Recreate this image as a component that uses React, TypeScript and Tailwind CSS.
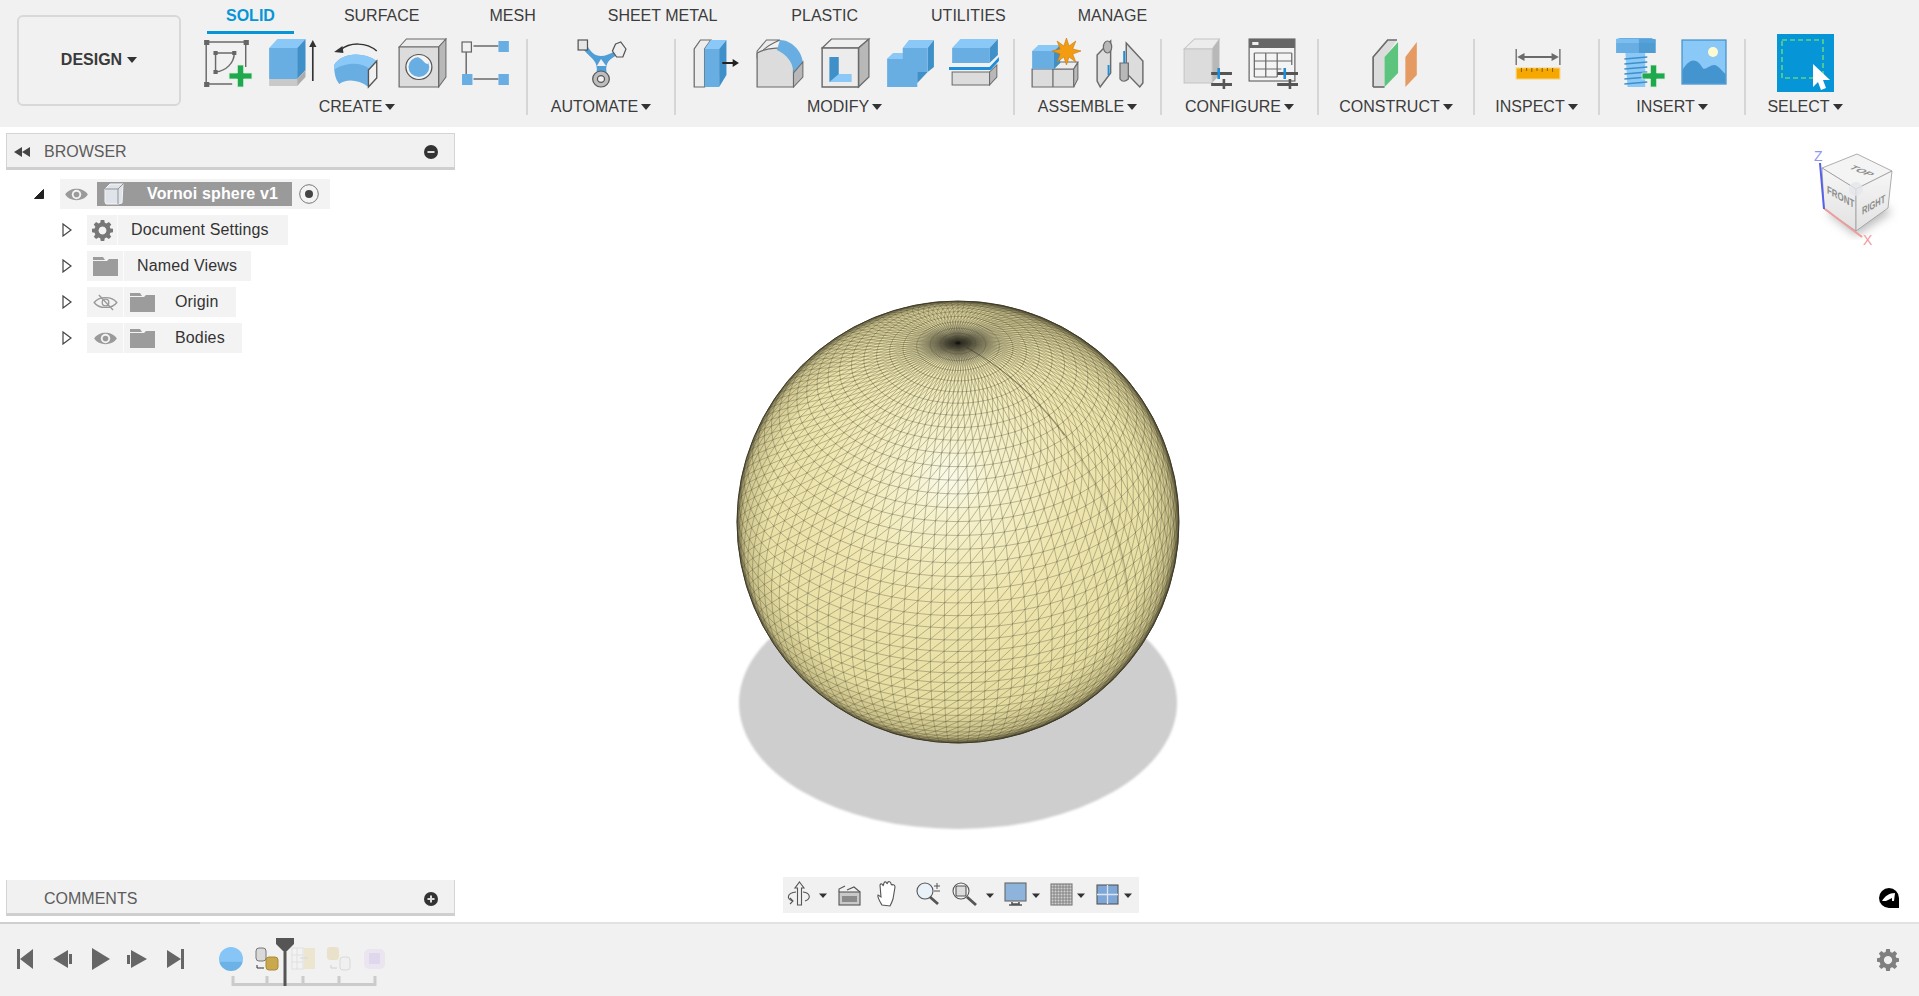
import React from "react";

const BLUE = "#68aee3";
const LIGHT = "#8ac8f8";
const DARK = "#3f90c8";
const GREY = "#dcdcdc";
const SIDE = "#b8b8b8";
const LINE = "#6a6a6a";

const TABS = [
  { label: "SURFACE", gap: "ml-[30px]" },
  { label: "MESH", gap: "ml-[30px]" },
  { label: "SHEET METAL", gap: "ml-[32px]" },
  { label: "PLASTIC", gap: "ml-[34px]" },
  { label: "UTILITIES", gap: "ml-[33px]" },
  { label: "MANAGE", gap: "ml-[32px]" },
];

function Icon({ children }: { children: React.ReactNode }) {
  return (
    <svg viewBox="0 0 50 52" preserveAspectRatio="none" className="w-[52px] h-[52px] shrink-0">
      {children}
    </svg>
  );
}

function Plus({ x, y, s = 10 }: { x: number; y: number; s?: number }) {
  return (
    <path
      d={`M${x - 3} ${y - s}h6v${s - 3}h${s - 3}v6h-${s - 3}v${s - 3}h-6v-${s - 3}h-${s - 3}v-6h${s - 3}z`}
      fill="#1fa84c"
      stroke="#d6efdc"
      strokeWidth="0.8"
    />
  );
}

function Sliders({ x, y }: { x: number; y: number }) {
  return (
    <g>
      <rect x={x} y={y} width="20" height="3" fill="#555" />
      <rect x={x} y={y + 11} width="20" height="3" fill="#555" />
      <rect x={x + 6} y={y - 4} width="2.5" height="11" fill="#1c8fdc" />
      <rect x={x + 11} y={y + 7} width="2.5" height="11" fill="#555" />
    </g>
  );
}

const SketchIcon = () => (
  <Icon>
    <path d="M5 5H43M5 5V47M5 47H30M43 5V30" stroke={LINE} strokeWidth="1.4" fill="none" />
    <path d="M3 3h5v5H3zM41 3h5v5h-5zM3 45h5v5H3z" fill="#666" />
    <path d="M14 16H32M14 16V35M32 16C32 26 24 34 14 35" stroke={LINE} strokeWidth="1.4" fill="none" />
    <path d="M12 14h4v4h-4zM30 14h4v4h-4zM12 33h4v4h-4z" fill="#666" />
    <Plus x={38} y={39} s={11} />
  </Icon>
);

const ExtrudeIcon = () => (
  <Icon>
    <path d="M3 11 11 2H38L30 11Z" fill={LIGHT} />
    <path d="M3 11H30V42H3Z" fill={BLUE} />
    <path d="M30 11 38 2V33L30 42Z" fill={DARK} />
    <path d="M3 42H30V49H3Z" fill="#c9c9c9" />
    <path d="M30 42 38 33V40L30 49Z" fill="#adadad" />
    <path d="M45 44V8" stroke="#333" strokeWidth="1.6" />
    <path d="M41.500 10 45 3 48.500 10Z" fill="#333" />
  </Icon>
);

const RevolveIcon = () => (
  <Icon>
    <path d="M3 28C10 16 30 14 44 24L36 33V50C26 42 14 42 8 47C4 42 3 35 3 28Z" fill={BLUE} />
    <path d="M3 28C10 16 30 14 44 24L37 32C28 24 12 26 3 33Z" fill={LIGHT} />
    <path d="M36 33 44 24V41L36 50Z" fill="#f1f1f1" stroke="#555" strokeWidth="1.3" />
    <path d="M9 13C18 5 34 5 44 14" stroke="#333" strokeWidth="1.5" fill="none" />
    <path d="M3 15 11 9 12 16Z" fill="#333" />
  </Icon>
);

const HoleIcon = () => (
  <Icon>
    <path d="M3 10 10 2H48L41 10Z" fill="#ececec" stroke={LINE} strokeWidth="1" />
    <path d="M41 10 48 2V40L41 50Z" fill={SIDE} stroke={LINE} strokeWidth="1" />
    <path d="M3 10H41V50H3Z" fill={GREY} stroke={LINE} strokeWidth="1.2" />
    <circle cx="22" cy="30" r="12.5" fill="#f4f4f4" stroke="#555" strokeWidth="1.2" />
    <circle cx="22" cy="30" r="10" fill={BLUE} />
    <path d="M21 20C26 22 27 27 31 27C31 22 27 19 21 20Z" fill="#f4f4f4" />
  </Icon>
);

const FormIcon = () => (
  <Icon>
    <path d="M12 9H36M5 14V37M12 42H36" stroke={LINE} strokeWidth="1.4" />
    <rect x="1" y="5" width="9" height="10" fill="#f1f1f1" stroke="#666" strokeWidth="1.2" />
    <rect x="36" y="4" width="10" height="11" fill={BLUE} />
    <rect x="1" y="37" width="10" height="11" fill={BLUE} />
    <rect x="36" y="37" width="10" height="11" fill={BLUE} />
  </Icon>
);

const AutomateIcon = () => (
  <Icon>
    <path d="M8 12C13 20 21 22 21 32L20 42H31L30 32C30 23 37 20 43 17L40 13C34 17 29 19 25 19C19 19 15 15 12 9Z" fill="#4f9fd6" />
    <path d="M25 22 30 29H21Z" fill="#f1f1f1" />
    <circle cx="25" cy="42" r="8" fill="#bdbdbd" stroke="#555" strokeWidth="1.2" />
    <circle cx="25" cy="42" r="3.4" fill="#f1f1f1" stroke="#555" strokeWidth="1.2" />
    <rect x="3" y="3" width="9" height="10" fill="#e6e6e6" stroke="#555" strokeWidth="1.2" />
    <path d="M39 7 44 5 49 12 46 20H40L36 14Z" fill="#efefef" stroke="#555" strokeWidth="1.2" />
  </Icon>
);

const PressPullIcon = () => (
  <Icon>
    <g transform="translate(2 0)">
      <path d="M3 50V12L9 3H19L13 12V50Z" fill="#ededed" stroke={LINE} strokeWidth="1.2" />
      <path d="M13 12 19 3H34L27 12Z" fill={LIGHT} />
      <path d="M13 12H27V50H13Z" fill={BLUE} />
      <path d="M27 12 34 3V38L27 50Z" fill={DARK} />
      <path d="M30 26H42" stroke="#222" strokeWidth="2" />
      <path d="M40 22 46 26 40 30Z" fill="#222" />
    </g>
  </Icon>
);

const FilletIcon = () => (
  <Icon>
    <path d="M3 14 12 3H25C18 6 8 12 3 20Z" fill="#ececec" stroke={LINE} strokeWidth="1" />
    <path d="M3 16V50H38V30C38 24 34 17 30 12C20 10 10 12 3 16Z" fill={GREY} stroke={LINE} strokeWidth="1.2" />
    <path d="M25 3C36 3 46 14 47 25L38 36C38 26 32 18 22 13Z" fill={BLUE} />
    <path d="M38 50V36L47 25V40Z" fill={SIDE} stroke={LINE} strokeWidth="1" />
  </Icon>
);

const ShellIcon = () => (
  <Icon>
    <path d="M3 11 12 2H48L38 11Z" fill="#efefef" stroke={LINE} strokeWidth="1.2" />
    <path d="M38 11 48 2V40L38 50Z" fill={SIDE} stroke={LINE} strokeWidth="1.2" />
    <path d="M3 11H38V50H3Z" fill="#ececec" stroke={LINE} strokeWidth="1.4" />
    <path d="M10 20H19V37H31V45H10Z" fill={DARK} />
    <path d="M19 37H31V45H10Z" fill={LIGHT} />
  </Icon>
);

const CombineIcon = () => (
  <Icon>
    <path d="M18 11 24 3H48L42 11Z" fill={LIGHT} />
    <path d="M42 11 48 3V30L42 35Z" fill={DARK} />
    <path d="M18 11H42V35H32V50H3V22L9 16H18Z" fill={BLUE} />
    <path d="M3 22 9 16H18V22Z" fill={LIGHT} />
    <path d="M32 35H42L32 46Z" fill={DARK} />
  </Icon>
);

const SplitIcon = () => (
  <Icon>
    <path d="M3 11 11 2H47L39 11Z" fill={LIGHT} />
    <path d="M3 11H39V26H3Z" fill={BLUE} />
    <path d="M39 11 47 2V18L39 26Z" fill={DARK} />
    <path d="M0 30H39L48 20V24L40 33H0Z" fill="#1c8fdc" />
    <path d="M3 35H39V48H3Z" fill={GREY} stroke={LINE} strokeWidth="1" />
    <path d="M39 35 46 28V40L39 48Z" fill={SIDE} stroke={LINE} strokeWidth="1" />
  </Icon>
);

const ComponentIcon = () => (
  <Icon>
    <path d="M3 32H23V50H3ZM23 32H43V50H23Z" fill={GREY} stroke={LINE} strokeWidth="1.2" />
    <path d="M23 32 30 25H47L43 32Z" fill="#ededed" stroke={LINE} strokeWidth="1" />
    <path d="M43 32 47 26V42L43 50Z" fill={SIDE} stroke={LINE} strokeWidth="1" />
    <path d="M3 14 9 8H30L24 14Z" fill={LIGHT} />
    <path d="M3 14H24V32H3Z" fill={BLUE} />
    <path d="M24 14 30 8V26L24 32Z" fill={DARK} />
    <path d="M36 1 38.5 9 45 4 42 12 50 14 42 17 45 25 38.5 20 36 28 33.500 20 27 25 30 17 22 14 30 12 27 4 33.500 9Z" fill="#f39c12" stroke="#c9780a" strokeWidth="0.6" />
  </Icon>
);

const JointIcon = () => (
  <Icon>
    <path d="M3 18 16 4V36L6 50 3 44Z" fill={GREY} stroke={LINE} strokeWidth="1.4" />
    <ellipse cx="13" cy="10" rx="4" ry="6" fill={SIDE} stroke={LINE} strokeWidth="1.2" />
    <path d="M31 6 47 24V46L44 50 31 36Z" fill={GREY} stroke={LINE} strokeWidth="1.4" />
    <path d="M25 26H33V42C30 45 27 45 25 42Z" fill={SIDE} stroke={LINE} strokeWidth="1.2" />
    <path d="M29 14V26M14 28V38" stroke="#1c8fdc" strokeWidth="1.8" />
  </Icon>
);

const ConfigIcon = () => (
  <Icon>
    <path d="M3 12 13 2H37L30 12Z" fill="#ececec" stroke="#c4c4c4" />
    <path d="M30 12 37 2V38L30 46Z" fill={SIDE} />
    <path d="M3 12H30V46H3Z" fill={GREY} stroke="#c4c4c4" />
    <Sliders x={29} y={35} />
  </Icon>
);

const TableIcon = () => (
  <Icon>
    <rect x="3" y="2" width="44" height="42" fill="#f4f4f4" stroke={LINE} strokeWidth="1.2" />
    <rect x="3" y="2" width="44" height="9" fill="#666" />
    <rect x="6" y="5" width="6" height="3" fill="#eee" />
    <path d="M8 16H44M8 24H44M8 32H34M8 40H30M8 16V40M19 16V40M30 16V40M44 16V28" stroke={LINE} strokeWidth="1.2" fill="none" />
    <Sliders x={30} y={35} />
  </Icon>
);

const ConstructIcon = () => (
  <Icon>
    <path d="M3 20 17 3H26L20 12 14 20V50H3Z" fill={GREY} />
    <path d="M3 50V20L17 3H26" stroke={LINE} strokeWidth="1.6" fill="none" />
    <path d="M3 50H14" stroke={LINE} strokeWidth="1.6" />
    <path d="M14 20 27 5V36L14 50Z" fill="#5cc47d" />
    <path d="M34 50V20L45 5V38Z" fill="#e59a62" />
  </Icon>
);

const InspectIcon = () => (
  <Icon>
    <path d="M5 12V28M47 12V28" stroke={LINE} strokeWidth="1.3" />
    <path d="M10 20H42" stroke={LINE} strokeWidth="2" />
    <path d="M6 20 13 16V24ZM46 20 39 16V24Z" fill={LINE} />
    <rect x="5" y="31" width="42" height="11" fill="#f7a800" stroke="#f6d27c" />
    <path d="M10 31v4M15 31v3M20 31v4M25 31v3M30 31v4M35 31v3M40 31v4" stroke="#8a6200" strokeWidth="1" />
  </Icon>
);

const InsertIcon = () => (
  <Icon>
    <path d="M2 2 6 1H36L40 3V16H2Z" fill={BLUE} />
    <path d="M2 2H40V6H2Z" fill={LIGHT} opacity=".6" />
    <path d="M24 2H40V16H24Z" fill={DARK} opacity=".6" />
    <path d="M11 16H30V50H13Z" fill={LIGHT} />
    <path d="M10 22 32 20M10 27 32 25M10 32 32 30M10 37 32 35M10 42 32 40M10 47 32 45" stroke={DARK} strokeWidth="1.3" />
    <Plus x={38} y={39} s={11} />
  </Icon>
);

const CanvasIcon = () => (
  <svg viewBox="0 0 52 52" className="w-[52px] h-[52px] shrink-0">
    <rect x="3" y="3" width="44" height="44" fill={LIGHT} stroke={DARK} strokeWidth="1.2" />
    <circle cx="34" cy="15" r="5" fill="#fffbd0" />
    <path d="M3.500 33C10 22 17 20 23 30C26 36 32 25 38 29C41 31 44 35 46.500 37V46.500H3.500Z" fill="#4394cf" />
  </svg>
);

const SelectIcon = () => (
  <svg viewBox="0 0 57 58" className="w-[57px] h-[58px] shrink-0 -mt-[3px]">
    <rect width="57" height="58" fill="#0696d7" />
    <rect x="5" y="6" width="41" height="38" fill="none" stroke="#5fd38a" strokeWidth="1.6" strokeDasharray="5 3" />
    <path d="M36 30V53L41 48 44 56 49 54 46 46H53Z" fill="#fff" />
  </svg>
);

const Caret = () => (
  <span className="inline-block w-0 h-0 border-x-[5px] border-t-[6px] border-x-transparent border-t-[#333]" />
);

function Group({ label, width, children }: { label: string; width: string; children: React.ReactNode }) {
  return (
    <div className={`flex flex-col items-center shrink-0 ${width}`}>
      <div className="flex items-start justify-center gap-[13px] h-[52px]">{children}</div>
      <div className="mt-[8px] h-[20px] flex items-center gap-[3px] text-[16px] leading-[20px] text-[#3c3c3c]">
        {label}
        <Caret />
      </div>
    </div>
  );
}

const Sep = () => <div className="w-[2px] h-[76px] mt-[2px] bg-[#d6d6d6] shrink-0" />;

function Toolbar() {
  return (
    <div className="h-[127px] shrink-0 bg-[#f1f1f1] flex">
      <div className="ml-[17px] mt-[15px] w-[164px] h-[91px] pb-[2px] rounded-md border-2 border-[#d8d8d8] flex items-center justify-center gap-[5px] font-bold text-[16px] text-[#3a3a3a] shrink-0">
        DESIGN
        <Caret />
      </div>
      <div className="ml-[16px] flex flex-col">
        <div className="flex ml-[10px] h-[34px]">
          <div className="px-[19px] pt-[6px] leading-[20px] text-[16px] font-bold text-[#0696d7] border-b-[3px] border-[#0696d7]">
            SOLID
          </div>
          {TABS.map((t) => (
            <div key={t.label} className={`${t.gap} px-[20px] pt-[6px] leading-[20px] text-[16px] text-[#3c3c3c]`}>
              {t.label}
            </div>
          ))}
        </div>
        <div className="flex items-start mt-[3px]">
          <Group label="CREATE" width="w-[320px] mr-[9px]">
            <SketchIcon />
            <ExtrudeIcon />
            <RevolveIcon />
            <HoleIcon />
            <FormIcon />
          </Group>
          <Sep />
          <Group label="AUTOMATE" width="w-[146px]">
            <AutomateIcon />
          </Group>
          <Sep />
          <Group label="MODIFY" width="w-[337px]">
            <PressPullIcon />
            <FilletIcon />
            <ShellIcon />
            <CombineIcon />
            <SplitIcon />
          </Group>
          <Sep />
          <Group label="ASSEMBLE" width="w-[145px]">
            <ComponentIcon />
            <JointIcon />
          </Group>
          <Sep />
          <Group label="CONFIGURE" width="w-[155px]">
            <ConfigIcon />
            <TableIcon />
          </Group>
          <Sep />
          <Group label="CONSTRUCT" width="w-[154px]">
            <ConstructIcon />
          </Group>
          <Sep />
          <Group label="INSPECT" width="w-[123px]">
            <InspectIcon />
          </Group>
          <Sep />
          <Group label="INSERT" width="w-[144px]">
            <InsertIcon />
            <CanvasIcon />
          </Group>
          <Sep />
          <Group label="SELECT" width="w-[118px]">
            <SelectIcon />
          </Group>
        </div>
      </div>
    </div>
  );
}

const Eye = ({ off }: { off?: boolean }) => (
  <svg viewBox="0 0 26 18" className="w-[25px] h-[17px]">
    {off ? (
      <g fill="none" stroke="#999" strokeWidth="1.4">
        <path d="M1 9C6 2 20 2 25 9C20 16 6 16 1 9Z" />
        <circle cx="13" cy="9" r="3.500" />
        <path d="M6 1 21 17" />
      </g>
    ) : (
      <g>
        <path d="M1 9C6 1 20 1 25 9C20 17 6 17 1 9Z" fill="#9a9a9a" />
        <circle cx="13" cy="9" r="5" fill="#f3f3f3" />
        <circle cx="13" cy="9" r="3" fill="#9a9a9a" />
      </g>
    )}
  </svg>
);

const Folder = () => (
  <svg viewBox="0 0 25 19" className="w-[25px] h-[19px]">
    <path d="M0 0H10L12 3H0Z M0 4H14L16 2H25V19H0Z" fill="#9c9c9c" />
  </svg>
);

const Gear = ({ size, color }: { size: string; color: string }) => (
  <svg viewBox="0 0 24 24" className={size}>
    <path
      fill={color}
      fillRule="evenodd"
      d="M10 1h4l.6 3.200 2 .8L19.300 3.200 22 6l-1.800 2.600.8 2L24 11v4l-3 .5-.8 2L22 20l-2.700 2.800-2.700-1.800-2 .8L14 25h-4l-.6-3.200-2-.8L4.700 22.800 2 20l1.800-2.500-.8-2L0 15v-4l3-.4.8-2L2 6l2.700-2.800L7.400 5l2-.8ZM12 8.500a4.500 4.500 0 1 0 .01 0Z"
      transform="translate(0 -1)"
    />
  </svg>
);

const Chevron = () => (
  <svg viewBox="0 0 10 14" className="w-[10px] h-[14px]">
    <path d="M1 1 9 7 1 13Z" fill="#fff" stroke="#444" strokeWidth="1.2" />
  </svg>
);

function TreeRow({ children }: { children: React.ReactNode }) {
  return (
    <div className="flex items-center h-[30px] mt-[6px]">
      <div className="w-[81px] pl-[56px] flex items-center">
        <Chevron />
      </div>
      <div className="flex items-center h-[30px] bg-[#f3f3f3] text-[16px] tracking-[0.15px] text-[#333]">{children}</div>
    </div>
  );
}

const Cell = ({ w, children }: { w: string; children: React.ReactNode }) => (
  <div className={`${w} h-full flex items-center justify-center border-r border-white/70`}>{children}</div>
);

function Browser() {
  return (
    <div className="w-[449px] ml-[6px] mt-[6px]">
      <div className="h-[37px] pt-[2px] bg-[#f1f1f1] border border-[#d4d4d4] border-b-[3px] border-b-[#cfcfcf] flex items-center pl-[7px] pr-[16px]">
        <svg viewBox="0 0 16 10" className="w-[16px] h-[10px]">
          <path d="M0 5 8 0V10ZM8 5 16 0V10Z" fill="#444" />
        </svg>
        <span className="ml-[14px] text-[16px] text-[#5c5c5c]">BROWSER</span>
        <svg viewBox="0 0 14 14" className="w-[14px] h-[14px] ml-auto">
          <circle cx="7" cy="7" r="7" fill="#333" />
          <rect x="3.500" y="6" width="7" height="2" fill="#ddd" />
        </svg>
      </div>
      <div className="flex items-center h-[30px] mt-[9px]">
        <div className="w-[54px] pl-[28px] flex items-center">
          <svg viewBox="0 0 10 10" className="w-[10px] h-[10px]">
            <path d="M9.500 .5V9.500H.5Z" fill="#222" stroke="#222" />
          </svg>
        </div>
        <div className="flex items-center h-[30px] bg-[#f3f3f3]">
          <div className="w-[37px] pr-[4px] flex justify-center">
            <Eye />
          </div>
          <div className="w-[195px] h-[24px] bg-[#9a9a9a] flex items-center pl-[7px]">
            <svg viewBox="0 0 20 22" className="w-[20px] h-[22px]">
              <path d="M1 6 6 1H19L18 20 14 21H2L1 19Z" fill="#dfe3ea" stroke="#f6f6f6" />
              <path d="M1 6H14V21M14 6 19 1" fill="none" stroke="#8f9399" />
            </svg>
            <span className="ml-[23px] text-[16px] tracking-[0.15px] font-bold text-white whitespace-nowrap">Vornoi sphere v1</span>
          </div>
          <div className="w-[38px] pr-[4px] flex justify-center">
            <svg viewBox="0 0 20 20" className="w-[20px] h-[20px]">
              <circle cx="10" cy="10" r="9.300" fill="#f4f4f4" stroke="#777" />
              <circle cx="10" cy="10" r="4" fill="#444" />
            </svg>
          </div>
        </div>
      </div>
      <TreeRow>
        <Cell w="w-[31px]">
          <Gear size="w-[21px] h-[21px]" color="#777" />
        </Cell>
        <span className="pl-[13px] pr-[19px]">Document Settings</span>
      </TreeRow>
      <TreeRow>
        <Cell w="w-[37px]">
          <Folder />
        </Cell>
        <span className="pl-[13px] pr-[14px]">Named Views</span>
      </TreeRow>
      <TreeRow>
        <Cell w="w-[37px]">
          <Eye off />
        </Cell>
        <div className="w-[39px] pr-[2px] flex justify-center">
          <Folder />
        </div>
        <span className="pl-[12px] pr-[17px]">Origin</span>
      </TreeRow>
      <TreeRow>
        <Cell w="w-[37px]">
          <Eye />
        </Cell>
        <div className="w-[39px] pr-[2px] flex justify-center">
          <Folder />
        </div>
        <span className="pl-[12px] pr-[17px]">Bodies</span>
      </TreeRow>
    </div>
  );
}

function Comments() {
  return (
    <div className="w-[449px] ml-[6px] mb-[6px] h-[36px] pt-[4px] bg-[#f1f1f1] border-x border-[#d4d4d4] border-b-[3px] border-b-[#cfcfcf] flex items-center pl-[37px] pr-[16px]">
      <span className="text-[16px] text-[#5c5c5c]">COMMENTS</span>
      <svg viewBox="0 0 14 14" className="w-[14px] h-[14px] ml-auto">
        <circle cx="7" cy="7" r="7" fill="#333" />
        <path d="M3.500 6h7v2h-7zM6 3.500h2v7H6z" fill="#ddd" />
      </svg>
    </div>
  );
}

// UV sphere: rings, meridians and one set of diagonals, seen with the pole tilted at the viewer
const CX = 958;
const CY = 522;
const R = 221;
const PY = 0.81;
const PZ = 0.586;
const RAD = Math.PI / 180;

function project(lat: number, lon: number) {
  const c = Math.cos(lat * RAD);
  const s = Math.sin(lat * RAD);
  const x = c * Math.cos(lon * RAD);
  const y = -PZ * c * Math.sin(lon * RAD) + PY * s;
  const z = PY * c * Math.sin(lon * RAD) + PZ * s;
  return { x: CX + R * x, y: CY - R * y, z };
}

function seg(a: { x: number; y: number; z: number }, b: { x: number; y: number; z: number }) {
  if (a.z < 0 || b.z < 0) return "";
  return `M${a.x.toFixed(1)} ${a.y.toFixed(1)}L${b.x.toFixed(1)} ${b.y.toFixed(1)}`;
}

function buildMesh() {
  const lats: number[] = [];
  for (let l = -86.4; l < 84; l += 3.6) lats.push(l);
  for (const colat of [4.6, 3.2, 2.4, 1.8, 1.3, 0.8, 0.4]) lats.push(90 - colat);
  const step = 3.6;
  let d = "";
  lats.forEach((lat, i) => {
    const next = lats[i + 1];
    for (let lon = 0; lon < 360; lon += step) {
      const p = project(lat, lon);
      d += seg(p, project(lat, lon + step));
      if (next !== undefined) {
        d += seg(p, project(next, lon));
        d += seg(p, project(next, lon - step));
      }
    }
  });
  return d;
}

function seam(from: number, to: number) {
  let d = "";
  for (let l = from; l > to; l -= 3) d += seg(project(l, 40), project(l - 3, 40));
  return d;
}

const MESH = buildMesh();

function SphereCanvas() {
  return (
    <svg viewBox="0 127 1919 795" className="absolute inset-0 w-full h-full">
      <defs>
        <radialGradient id="body" gradientUnits="userSpaceOnUse" cx="950" cy="478" r="300">
          <stop offset="0" stopColor="#fafae8" />
          <stop offset="0.14" stopColor="#f5f1cb" />
          <stop offset="0.4" stopColor="#efe6b0" />
          <stop offset="0.7" stopColor="#e8dfa3" />
          <stop offset="1" stopColor="#d8ce92" />
        </radialGradient>
        <radialGradient id="rim" gradientUnits="userSpaceOnUse" cx="958" cy="522" r="221">
          <stop offset="0.86" stopColor="#5c5430" stopOpacity="0" />
          <stop offset="0.97" stopColor="#5c5430" stopOpacity="0.2" />
          <stop offset="1" stopColor="#2e2a18" stopOpacity="0.6" />
        </radialGradient>
        <radialGradient id="pole" gradientUnits="userSpaceOnUse" cx="958" cy="343" r="40" gradientTransform="translate(0 142) scale(1 .586)">
          <stop offset="0" stopColor="#000" stopOpacity="0.95" />
          <stop offset="0.1" stopColor="#111" stopOpacity="0.5" />
          <stop offset="0.5" stopColor="#222" stopOpacity="0.25" />
          <stop offset="1" stopColor="#222" stopOpacity="0" />
        </radialGradient>
        <filter id="soft">
          <feGaussianBlur stdDeviation="1.2" />
        </filter>
      </defs>
      <ellipse cx="958" cy="703" rx="219" ry="126" fill="#cecece" filter="url(#soft)" />
      <circle cx={CX} cy={CY} r={R} fill="url(#body)" />
      <path d={MESH} fill="none" stroke="#55533a" strokeOpacity="0.42" strokeWidth="0.9" />
      <path d={seam(87, 52)} fill="none" stroke="#2c2a1c" strokeOpacity="0.4" strokeWidth="1.2" />
      <path d={seam(52, 4)} fill="none" stroke="#2c2a1c" strokeOpacity="0.12" strokeWidth="2" />
      <ellipse cx="958" cy="343" rx="40" ry="24" fill="url(#pole)" />
      <circle cx={CX} cy={CY} r={R} fill="url(#rim)" />
      <circle cx={CX} cy={CY} r={R} fill="none" stroke="#3d3a28" strokeWidth="1" />
    </svg>
  );
}

function ViewCube() {
  return (
    <svg viewBox="1780 130 139 130" className="absolute right-0 top-[3px] w-[139px] h-[130px]">
      <defs>
        <linearGradient id="cubeFace" x1="0" y1="0" x2="0" y2="1">
          <stop offset="0" stopColor="#f6f6f6" />
          <stop offset="1" stopColor="#e2e2e2" />
        </linearGradient>
        <filter id="cubeShadow">
          <feGaussianBlur stdDeviation="5" />
        </filter>
      </defs>
      <path d="M1826 212 1856 236 1892 212 1870 196Z" fill="#bdbdbd" filter="url(#cubeShadow)" />
      <path d="M1857 154 1892 171 1856 189 1822 168Z" fill="#f4f4f4" stroke="#999" strokeWidth="0.8" />
      <path d="M1822 168 1856 189V231L1824 209Z" fill="url(#cubeFace)" stroke="#999" strokeWidth="0.8" />
      <path d="M1892 171 1856 189V231L1888 208Z" fill="url(#cubeFace)" stroke="#999" strokeWidth="0.8" />
      <circle cx="1856" cy="189" r="7" fill="#e4e6ea" opacity=".8" />
      <g fontFamily="'Liberation Sans', Arial, sans-serif" fontSize="11" fill="#8c8c8c">
        <text transform="matrix(.72 .4 0 1 1827 193)" fontWeight="700">FRONT</text>
        <text transform="matrix(.68 -.38 0 1 1862 215)" fontWeight="700">RIGHT</text>
        <text transform="matrix(.8 .32 -.7 .3 1848 168)" fontWeight="700" fontSize="13">TOP</text>
        <text x="1814" y="161" fontSize="14" fill="#8f96f2">Z</text>
        <text x="1863" y="245" fontSize="14" fill="#f29a9a">X</text>
      </g>
      <path d="M1820 163 1824 209" stroke="#5560ea" strokeWidth="2" />
      <path d="M1825 209 1862 237" stroke="#ee9d9d" strokeWidth="2" />
    </svg>
  );
}

function NavBar() {
  const caret = (x: number) => <path key={x} d={`M${x - 4} 893.500h8l-4 4.500z`} fill="#333" />;
  return (
    <div className="absolute left-[783px] bottom-[9px] w-[356px] h-[36px] bg-[#f1f1f1]">
      <svg viewBox="783 877 356 36" className="w-full h-full">
        {[823, 990, 1036, 1081, 1128].map(caret)}
        <g fill="none" stroke="#555" strokeWidth="1.100">
          <path d="M799.500 882 804 888H801.500V905H797.500V888H795Z" fill="#f1f1f1" />
          <path d="M796 892C787 893 786 899 793 901M803 892C811 893 811 899 805 901" />
          <path d="M790 898 793 901 790 904" />
          <rect x="839" y="892" width="21" height="13" fill="#c9c9c9" />
          <rect x="842" y="896" width="15" height="6" fill="#8a8a8a" stroke="none" />
          <path d="M839 892V889L845 886M847 890 854 887 860 892" />
          <path d="M882 905C879 900 877 897 878 895L881 897 880 885C881 883 883 884 883 886L884 883C885 881 887 882 887 884L888 882C889 881 891 882 891 884L892 885C893 884 895 885 895 887L893 899C892 902 891 904 890 906Z" fill="#fff" />
          <circle cx="925" cy="891" r="8" fill="#e8f2f8" />
          <path d="M930 897 938 904" strokeWidth="2.800" stroke="#555" />
          <path d="M934 886H940M937 883V889M934 891H940" strokeWidth="1" />
          <circle cx="961" cy="891" r="8" fill="#eef3f6" />
          <rect x="956" y="886" width="10" height="10" fill="#dcdcdc" rx="1" />
          <path d="M967 897 976 905" strokeWidth="2.800" />
          <rect x="1005" y="883" width="21" height="18" fill="#8fb4dc" stroke="#666" />
          <path d="M1012 902V904H1019V902M1009 905H1022" strokeWidth="1.600" />
          <rect x="1051" y="884" width="21" height="21" fill="#d0d0d0" stroke="#777" />
          <path d="M1054 884V905M1057 884V905M1060 884V905M1063 884V905M1066 884V905M1069 884V905M1051 887H1072M1051 890H1072M1051 893H1072M1051 896H1072M1051 899H1072M1051 902H1072" stroke="#777" strokeWidth=".8" />
          <rect x="1097" y="885" width="21" height="19" fill="#7ea6d6" stroke="#555" />
          <path d="M1107.500 885V904M1097 894.500H1118" stroke="#dce6f2" strokeWidth="1.300" />
        </g>
      </svg>
    </div>
  );
}

function Logo() {
  return (
    <svg viewBox="0 0 20 20" className="absolute right-[20px] bottom-[14px] w-[20px] h-[20px]">
      <path d="M10 0A10 10 0 1 0 10 20H20V10A10 10 0 0 0 10 0Z" fill="#000" />
      <path d="M3 13C6 8 10 5 16 5L15 13H13V10L7 13Z" fill="#fff" />
    </svg>
  );
}

function Timeline() {
  return (
    <div className="h-[74px] shrink-0 bg-[#f1f1f1] border-t-2 border-[#e2e2e2] flex items-center relative">
      <div className="absolute left-0 -top-[2px] w-[200px] h-[2px] bg-[#cfcfcf]" />
      <svg viewBox="0 922 400 74" className="w-[400px] h-[74px] shrink-0">
        <defs>
          <linearGradient id="ball" x1="0" y1="0" x2="0" y2="1">
            <stop offset="0.6" stopColor="#86c5f6" />
            <stop offset="0.62" stopColor="#6cb2e6" />
          </linearGradient>
        </defs>
        <g fill="#666">
          <path d="M17 948h3v20h-3zM33 948v20L20 958z" />
          <path d="M53 958 68 949V967zM69 953h3v10h-3z" />
          <path d="M92 947 110 958 92 969z" />
          <path d="M127 954h3v9h-3zM131 949 147 958 131 967z" />
          <path d="M167 949 181 958 167 967zM181 948h3v20h-3z" />
        </g>
        <path d="M233 985V975M233 983.500H376M267 975V983M303 975V983M339 975V983M375 975V985" stroke="#cbcbcb" strokeWidth="3" fill="none" />
        <circle cx="231" cy="958" r="12" fill="url(#ball)" />
        <g>
          <rect x="256" y="947" width="10" height="13" rx="3" fill="#d9d9d9" stroke="#777" />
          <rect x="266" y="956" width="12" height="13" rx="3" fill="#c9a84e" stroke="#a98a36" />
          <path d="M257 964V967H264" fill="none" stroke="#333" />
        </g>
        <g opacity=".45">
          <rect x="292" y="947" width="11" height="21" fill="#f4f4f4" stroke="#ccc" />
          <path d="M292 954H303M292 961H303M297 947V968" stroke="#ccc" />
          <rect x="304" y="947" width="11" height="21" fill="#e6d8a8" />
          <path d="M300 957H308" stroke="#bbb" />
          <rect x="327" y="946" width="12" height="13" rx="3" fill="#e0cf9c" />
          <rect x="340" y="956" width="10" height="13" rx="3" fill="#f0f0f0" stroke="#bbb" />
          <path d="M331 964V967H337" fill="none" stroke="#aaa" />
          <rect x="364" y="948" width="21" height="20" rx="5" fill="#e2d8f2" />
          <rect x="369" y="952" width="11" height="11" fill="#cbbbe8" />
        </g>
        <path d="M276 937H294V943L287 950H283L276 943Z" fill="#555" />
        <rect x="283.500" y="948" width="3" height="37" fill="#555" />
      </svg>
      <div className="ml-auto mr-[20px]">
        <Gear size="w-[22px] h-[22px]" color="#808080" />
      </div>
    </div>
  );
}

export default function App() {
  return (
    <div className="w-full h-screen flex flex-col overflow-hidden bg-white font-['Liberation_Sans',Arial,sans-serif]">
      <Toolbar />
      <div className="flex-1 relative min-h-0">
        <SphereCanvas />
        <ViewCube />
        <NavBar />
        <Logo />
        <div className="relative h-full flex flex-col justify-between w-[455px]">
          <Browser />
          <Comments />
        </div>
      </div>
      <Timeline />
    </div>
  );
}
